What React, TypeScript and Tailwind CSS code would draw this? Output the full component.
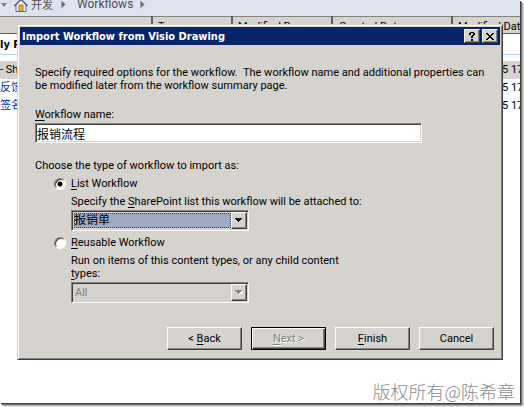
import type { ReactNode } from "react";

const raised =
  "border border-t-white border-l-white border-r-[#404040] border-b-[#404040] bg-[#d6d3ce] shadow-[inset_-1px_-1px_0_#848284]";
const sunken =
  "border border-t-[#848284] border-l-[#848284] border-r-white border-b-white shadow-[inset_1px_1px_0_#404040,inset_-1px_-1px_0_#d6d3ce]";

function Key({ children }: { children: ReactNode }) {
  return <span className="underline decoration-1 underline-offset-2">{children}</span>;
}

function HomeIcon() {
  return (
    <svg className="h-[14px] w-[14px] shrink-0" viewBox="0 0 14 14" aria-hidden="true">
      <path d="M2 6 L7 1 L12 6 V13.5 H2 Z" fill="#fbfaf4" stroke="#5a6590" />
      <path d="M0.5 8 L7 1.5 L13.5 8" fill="none" stroke="#4a5888" strokeWidth="1.5" />
      <path d="M3 6.5 L7 2.5 L11 6.5 Z" fill="#fbf2cf" />
      <rect x="5" y="7" width="4" height="6" fill="#f0a83a" stroke="#b87824" />
    </svg>
  );
}

function Crumb() {
  return (
    <svg className="h-[9px] w-[5px] shrink-0" viewBox="0 0 6 9" aria-hidden="true">
      <path d="M0.5 0 L5.5 4.5 L0.5 9 Z" fill="#6c6e76" />
    </svg>
  );
}

function Arrow({ disabled = false }: { disabled?: boolean }) {
  return (
    <span
      className={`pointer-events-none absolute top-[2px] right-[2px] bottom-[2px] flex w-4 items-center justify-center ${raised}`}
    >
      <svg className="h-[5px] w-[8px]" viewBox="0 0 8 5" shapeRendering="crispEdges" aria-hidden="true">
        {disabled && <path d="M1 1h7v1H1z M2 2h5v1H2z M3 3h3v1H3z M4 4h1v1H4z" fill="#fff" />}
        <path d="M0 0h7v1H0z M1 1h5v1H1z M2 2h3v1H2z M3 3h1v1H3z" fill={disabled ? "#848284" : "#000"} />
      </svg>
    </span>
  );
}

const radio =
  "mr-[5px] h-3 w-3 shrink-0 appearance-none rounded-full border border-t-[#848284] border-l-[#848284] border-r-white border-b-white bg-white shadow-[inset_1px_1px_0_#404040] checked:bg-[radial-gradient(circle,#000_0,#000_2px,#fff_3px)]";

const pushButton = `h-[23px] w-[75px] ${raised}`;

const rows = [
  { name: "- Sh", style: "bg-[#d6d3ce] text-black" },
  { name: "反馈", style: "text-[#0033aa]" },
  { name: "签名", style: "text-[#0033aa]" },
];

const headCell = "border-r-2 border-[#606060] pt-[4px] pb-0 pr-0 font-normal";

function Background() {
  return (
    <div className="h-full overflow-hidden bg-white">
      <nav className="flex h-4 items-center overflow-hidden bg-[#dee3ef] pb-[7px] text-[12px] leading-[9px] text-[#505058]">
        <svg className="mr-[7px] ml-[1px] h-[4px] w-[6px] shrink-0" viewBox="0 0 6 4" aria-hidden="true">
          <path d="M0 0 H6 L3 4 Z" fill="#7c7e86" />
        </svg>
        <HomeIcon />
        <a href="#site" className="mr-[8px] ml-[3px] font-['Noto_Sans_CJK_SC',sans-serif] text-[11px]">开发</a>
        <Crumb />
        <a href="#workflows" className="mr-[7px] ml-[11px] text-[12px]">Workflows</a>
        <Crumb />
      </nav>
      <table className="w-full table-fixed border-collapse">
        <thead>
          <tr className="h-[17px] border-t border-b border-t-[#848284] border-b-[#606060] bg-[#d6d3ce] text-left leading-[12px] whitespace-nowrap">
            <th className={`w-[152px] pl-0 ${headCell}`} />
            <th className={`w-[80px] pl-[5px] ${headCell}`}>Type</th>
            <th className={`w-[100px] pl-[5px] ${headCell}`}>Modified By</th>
            <th className={`w-[120px] pl-[6px] ${headCell}`}>Created Date</th>
            <th className="overflow-hidden pt-[4px] pr-0 pb-0 pl-[5px] font-normal">Modified Date</th>
          </tr>
        </thead>
        <tbody>
          <tr className="h-[21px] border-b border-[#b5d3f7]">
            <td colSpan={5} className="p-0 font-['DejaVu_Sans_Condensed',sans-serif] font-bold">ly R</td>
          </tr>
          <tr className="h-[6px]"><td colSpan={5} /></tr>
          {rows.map((row) => (
            <tr key={row.name} className={`h-[18px] ${row.style}`}>
              <td colSpan={4} className="p-0">{row.name}</td>
              <td className="overflow-hidden p-0 text-left whitespace-nowrap text-black">
                <span className="block pl-[50px]">5 17</span>
              </td>
            </tr>
          ))}
        </tbody>
      </table>
    </div>
  );
}

function Dialog() {
  return (
    <section
      role="dialog"
      aria-labelledby="title"
      className="border border-t-[#d6d3ce] border-l-[#d6d3ce] border-r-[#404040] border-b-[#404040] bg-[#d6d3ce] p-[2px] shadow-[inset_1px_1px_0_#fff,inset_-1px_-1px_0_#848284]"
    >
      <header className="flex h-[18px] items-center bg-[#08246b] px-[2px] text-white">
        <h1 id="title" className="flex-1 font-['DejaVu_Sans_Condensed',sans-serif] text-[11px] font-bold">
          Import Workflow from Visio Drawing
        </h1>
        <button aria-label="Help" className={`mr-[2px] flex h-[14px] w-4 items-center justify-center ${raised}`}>
          <svg className="h-[9px] w-[7px]" viewBox="0 0 7 9" shapeRendering="crispEdges" aria-hidden="true">
            <path d="M1 0h4v1H1z M0 1h2v2H0z M4 1h2v2H4z M3 3h2v1H3z M2 4h2v2H2z M2 7h2v2H2z" />
          </svg>
        </button>
        <button aria-label="Close" className={`flex h-[14px] w-4 items-center justify-center ${raised}`}>
          <svg className="h-[7px] w-[8px]" viewBox="0 0 8 7" shapeRendering="crispEdges" aria-hidden="true">
            <path d="M0 0h2v1H0z M6 0h2v1H6z M1 1h2v1H1z M5 1h2v1H5z M2 2h4v1H2z M3 3h2v1H3z M2 4h4v1H2z M1 5h2v1H1z M5 5h2v1H5z M0 6h2v1H0z M6 6h2v1H6z" />
          </svg>
        </button>
      </header>

      <form className="pt-[21px] pr-[6px] pb-[7px] pl-[15px]">
        <p className="pr-2">
          Specify required options for the workflow.&nbsp; The workflow name and additional properties can be modified
          later from the workflow summary page.
        </p>
        <label htmlFor="name" className="mt-4 block"><Key>W</Key>orkflow name:</label>
        <input
          id="name"
          defaultValue="报销流程"
          className={`mt-[2px] block h-5 w-[calc(100%-72px)] bg-white px-[1px] text-[12px] ${sunken}`}
        />

        <fieldset className="mt-4">
          <legend>Choose the type of workflow to import as:</legend>
          <div className="mt-[5px] pl-[19px]">
            <label className="flex items-center">
              <input type="radio" name="kind" defaultChecked className={radio} />
              <span><Key>L</Key>ist Workflow</span>
            </label>
            <div className="mt-[5px] pl-[17px]">
              <label htmlFor="list" className="block">Specify the <Key>S</Key>harePoint list this workflow will be attached to:</label>
              <div className="relative mt-[2px] w-[178px]">
                <select id="list" className={`block h-[21px] w-full appearance-none bg-white p-[2px] text-[12px] leading-[13px] ${sunken} bg-[linear-gradient(#9caac6,#9caac6)] bg-no-repeat bg-origin-content bg-clip-content pr-[17px] pl-[2px]`}>
                  <option>报销单</option>
                </select>
                <span className="pointer-events-none absolute top-[3px] right-[18px] bottom-[3px] left-[3px] border border-dotted border-[#404040]" />
                <Arrow />
              </div>
            </div>
            <label className="mt-[5px] flex items-center">
              <input type="radio" name="kind" className={radio} />
              <span><Key>R</Key>eusable Workflow</span>
            </label>
            <div className="mt-[5px] pl-[17px]">
              <label htmlFor="content" className="block max-w-[280px]">
                Run on items of this content types, or any child content <Key>t</Key>ypes:
              </label>
              <div className="relative mt-[2px] w-[178px]">
                <select id="content" disabled className={`block h-[21px] w-full appearance-none bg-[#d6d3ce] pl-[3px] text-[#848284] opacity-100 ${sunken}`}>
                  <option>All</option>
                </select>
                <Arrow disabled />
              </div>
            </div>
          </div>
        </fieldset>

        <div className="mt-6 flex justify-end gap-[9px]">
          <button type="button" className={pushButton}>&lt; <Key>B</Key>ack</button>
          <button
            type="button"
            disabled
            className="h-[23px] w-[75px] border border-black text-[#848284] shadow-[inset_1px_1px_0_#fff,inset_-1px_-1px_0_#404040,inset_-2px_-2px_0_#848284] [text-shadow:1px_1px_0_#fff]"
          >
            <Key>N</Key>ext &gt;
          </button>
          <button type="button" className={pushButton}><Key>F</Key>inish</button>
          <button type="button" className={pushButton}>Cancel</button>
        </div>
      </form>
    </section>
  );
}

export default function App() {
  return (
    <div className="h-screen overflow-hidden bg-white pr-[4px] pb-[4px] font-['Roboto','Noto_Sans_CJK_SC',sans-serif] text-[11px] leading-[13px] text-black">
      <main className="relative h-full shadow-[1px_1px_0_#404040,2px_2px_1px_#707070,3px_3px_2px_#a0a0a0]">
        <Background />
        <div className="absolute top-6 right-[17px] left-[17px]">
          <Dialog />
        </div>
        <p className="absolute right-[5px] bottom-[2px] font-['Noto_Sans_CJK_SC',sans-serif] text-[18px] leading-[20px] font-light text-[#8c8c8c]">
          版权所有@陈希章
        </p>
      </main>
    </div>
  );
}
